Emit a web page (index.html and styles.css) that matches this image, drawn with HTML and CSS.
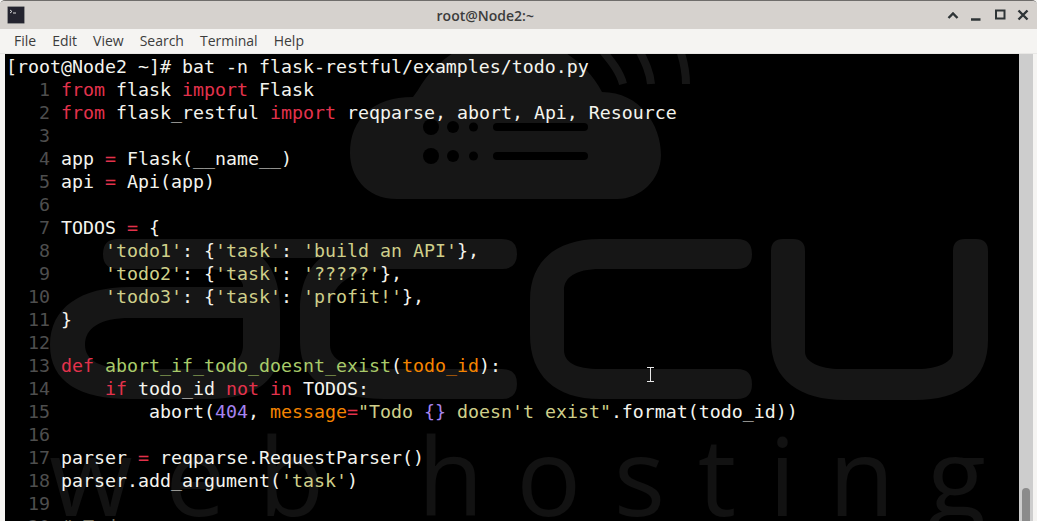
FILE: index.html
```
<!DOCTYPE html>
<html lang="en">
<head>
<meta charset="utf-8">
<title>root@Node2:~</title>
<link rel="stylesheet" href="styles.css">
</head>
<body>
<div class="window">
  <header class="titlebar">
    <svg class="app-icon" width="18" height="18" viewBox="0 0 18 18">
      <rect x="0.5" y="0.5" width="17" height="17" rx="1" fill="#24242f" stroke="#8d8d8d"/>
      <path d="M3 4l2 1.5-2 1.500M6 7h3" fill="none" stroke="#d8d8d8" stroke-width="1"/>
    </svg>
    <div class="title">root@Node2:~</div>
    <div class="controls">
      <svg width="14" height="14" viewBox="0 0 14 14"><path d="M2.500 10L7 5.500 11.500 10" fill="none" stroke="#2e3436" stroke-width="2.400"/></svg>
      <svg width="14" height="14" viewBox="0 0 14 14"><path d="M2 11.500h9.500" fill="none" stroke="#2e3436" stroke-width="2.400"/></svg>
      <svg width="14" height="14" viewBox="0 0 14 14"><rect x="3" y="2.500" width="8.500" height="8" fill="none" stroke="#2e3436" stroke-width="2"/></svg>
      <svg width="14" height="14" viewBox="0 0 14 14"><path d="M2.500 2.500l9 9M11.500 2.500l-9 9" fill="none" stroke="#2e3436" stroke-width="2.400"/></svg>
    </div>
  </header>
  <nav class="menubar">
    <span class="menu-item">File</span>
    <span class="menu-item">Edit</span>
    <span class="menu-item">View</span>
    <span class="menu-item">Search</span>
    <span class="menu-item">Terminal</span>
    <span class="menu-item">Help</span>
  </nav>
  <main class="content">
    <section class="terminal">
      <div class="watermark">
        <svg class="logo" width="1014" height="467" viewBox="5 54 1014 467">
          <path class="wm" d="M397 199C365 199 350 175 350 153C350 120 372 97 413 97L418 90A105 105 0 0 1 602 92C640 92 661 125 661 155C661 180 640 199 617 199Z"/>
          <path class="arc" d="M623 84C620 72 612 62 602 50M651 84C650 72 645 62 639 50M686 84C686 72 684 62 680 50"/>
          <circle class="hole" cx="431" cy="127" r="8"/><circle class="hole" cx="453" cy="127" r="6"/><circle class="hole" cx="473.500" cy="127" r="4.500"/>
          <rect class="hole" x="493" y="123" width="95" height="8" rx="4"/>
          <circle class="hole" cx="431" cy="156" r="8"/><circle class="hole" cx="453" cy="156" r="6"/><circle class="hole" cx="473.500" cy="156" r="4.500"/>
          <rect class="hole" x="493" y="152" width="95" height="8" rx="4"/>
          <path class="wm" fill-rule="evenodd" d="M118 239H205C255 239 280 262 280 310V345C280 382 255 399 205 399H130C80 399 50 382 50 345C50 308 80 287 130 287H243V285C240 274 225 269 205 269H118Q103 269 103 254Q103 239 118 239ZM243 318H130C100 318 85 328 85 345C85 360 100 369 130 369H205C232 369 243 360 243 345Z"/>
          <path class="wm" d="M200 239H395V258H200Z"/>
          <path class="wm" d="M502 239Q517 239 517 254Q517 269 502 269H390C350 269 330 285 330 310V345C330 360 345 369 390 369H502Q517 369 517 384Q517 399 502 399H390C325 399 300 380 300 340V310C300 262 330 239 390 239Z"/>
          <path class="wm" d="M737 239Q752 239 752 254Q752 269 737 269H600C575 269 564 278 564 290V350C564 362 575 369 600 369H737Q752 369 752 384Q752 399 737 399H600C555 399 530 375 530 335V300C530 262 555 239 600 239Z"/>
          <path class="wm" d="M771 251Q771 239 783 239H793Q805 239 805 251V352C805 362 820 369 840 369H918C938 369 953 362 953 352V251Q953 239 965 239H976Q988 239 988 251V340C988 380 960 400 915 400H845C800 400 771 380 771 340Z"/>
        </svg>
        <div class="wm-text">web hosting</div>
      </div>
      <div class="screen">
        <div class="line">[root@Node2 ~]# bat -n flask-restful/examples/todo.py</div>
        <div class="line"><span class="n">   1</span> <span class="k">from</span> flask <span class="k">import</span> Flask</div>
        <div class="line"><span class="n">   2</span> <span class="k">from</span> flask_restful <span class="k">import</span> reqparse, abort, Api, Resource</div>
        <div class="line"><span class="n">   3</span></div>
        <div class="line"><span class="n">   4</span> app <span class="k">=</span> Flask(__name__)</div>
        <div class="line"><span class="n">   5</span> api <span class="k">=</span> Api(app)</div>
        <div class="line"><span class="n">   6</span></div>
        <div class="line"><span class="n">   7</span> TODOS <span class="k">=</span> {</div>
        <div class="line"><span class="n">   8</span>     <span class="s">'todo1'</span>: {<span class="s">'task'</span>: <span class="s">'build an API'</span>},</div>
        <div class="line"><span class="n">   9</span>     <span class="s">'todo2'</span>: {<span class="s">'task'</span>: <span class="s">'?????'</span>},</div>
        <div class="line"><span class="n">  10</span>     <span class="s">'todo3'</span>: {<span class="s">'task'</span>: <span class="s">'profit!'</span>},</div>
        <div class="line"><span class="n">  11</span> }</div>
        <div class="line"><span class="n">  12</span></div>
        <div class="line"><span class="n">  13</span> <span class="k">def</span> <span class="f">abort_if_todo_doesnt_exist</span>(<span class="p">todo_id</span>):</div>
        <div class="line"><span class="n">  14</span>     <span class="k">if</span> todo_id <span class="k">not</span> <span class="k">in</span> TODOS:</div>
        <div class="line"><span class="n">  15</span>         abort(<span class="v">404</span>, <span class="p">message</span><span class="k">=</span><span class="s">"Todo </span><span class="v">{}</span><span class="s"> doesn't exist"</span>.format(todo_id))</div>
        <div class="line"><span class="n">  16</span></div>
        <div class="line"><span class="n">  17</span> parser <span class="k">=</span> reqparse.RequestParser()</div>
        <div class="line"><span class="n">  18</span> parser.add_argument(<span class="s">'task'</span>)</div>
        <div class="line"><span class="n">  19</span></div>
        <div class="line"><span class="n">  20</span> <span class="c"># Todo</span></div>
      </div>
      <svg class="cursor" width="9" height="15" viewBox="0 0 9 15"><path d="M1 .5h7M4.500 .5v14M1 14.500h7" fill="none" stroke="#e8e8e8" stroke-width="1"/></svg>
    </section>
    <aside class="scrollbar"><div class="thumb"></div></aside>
  </main>
</div>
</body>
</html>
```
FILE: styles.css
```
* { box-sizing: border-box; }
html, body { margin: 0; height: 100%; overflow: hidden; background: #f5f4f2; }
.window {
  height: 521px;
  display: flex;
  flex-direction: column;
  border-top: 1px solid #6f6d6b;
  border-radius: 5px 5px 0 0;
  overflow: hidden;
}
.titlebar {
  height: 28px;
  flex: none;
  background: #d6d2ce;
  display: flex;
  align-items: center;
  padding: 0 7px;
  position: relative;
}
.app-icon { flex: none; margin-top: -1px; }
.title {
  flex: 1;
  text-align: center;
  font: 600 14px "Open Sans", sans-serif;
  color: #3c3c3c;
}
.controls { display: flex; gap: 9.500px; flex: none; margin-top: -1px; }
.menubar {
  height: 25px;
  flex: none;
  background: #f5f4f2;
  display: flex;
  align-items: center;
  padding: 0 6px 2px;
  font: 14px "Open Sans", sans-serif;
  color: #3c3c3c;
  border-bottom: 1px solid #e8e7e5;
}
.menu-item { padding: 0 8px; }
.content { flex: 1; display: flex; min-height: 0; padding: 0 4px 0 5px; }
.terminal { flex: 1; background: #000; position: relative; overflow: hidden; }
.scrollbar { width: 14px; flex: none; background: #cdcdcd; display: flex; flex-direction: column; justify-content: flex-end; align-items: center; }
.thumb { width: 8px; height: 33px; background: #8b8b8b; border-radius: 4px 4px 0 0; }
.watermark { position: absolute; inset: 0; overflow: hidden; }
.logo { display: block; position: absolute; left: 0; top: 0; }
.wm { fill: #161616; }
.hole { fill: #000; }
.arc { fill: none; stroke: #161616; stroke-width: 8; }
.wm-text {
  position: absolute;
  left: 44px;
  top: 346px;
  font: 400 108px/150px "Open Sans", sans-serif;
  letter-spacing: 32.500px;
  color: #121212;
  white-space: pre;
}
.screen {
  position: relative;
  padding: 1px 0 0 1px;
  font: 18.27px/23px "DejaVu Sans Mono", monospace;
  color: #f4f4ee;
}
.line { height: 23px; white-space: pre; }
.n { color: #4e4e4e; }
.k { color: #e3324c; }
.s { color: #cfcf8a; }
.f { color: #a9cb6a; }
.p { color: #f58400; }
.v { color: #a684f0; }
.c { color: #75715e; }
.cursor { position: absolute; left: 641px; top: 313px; }
```
